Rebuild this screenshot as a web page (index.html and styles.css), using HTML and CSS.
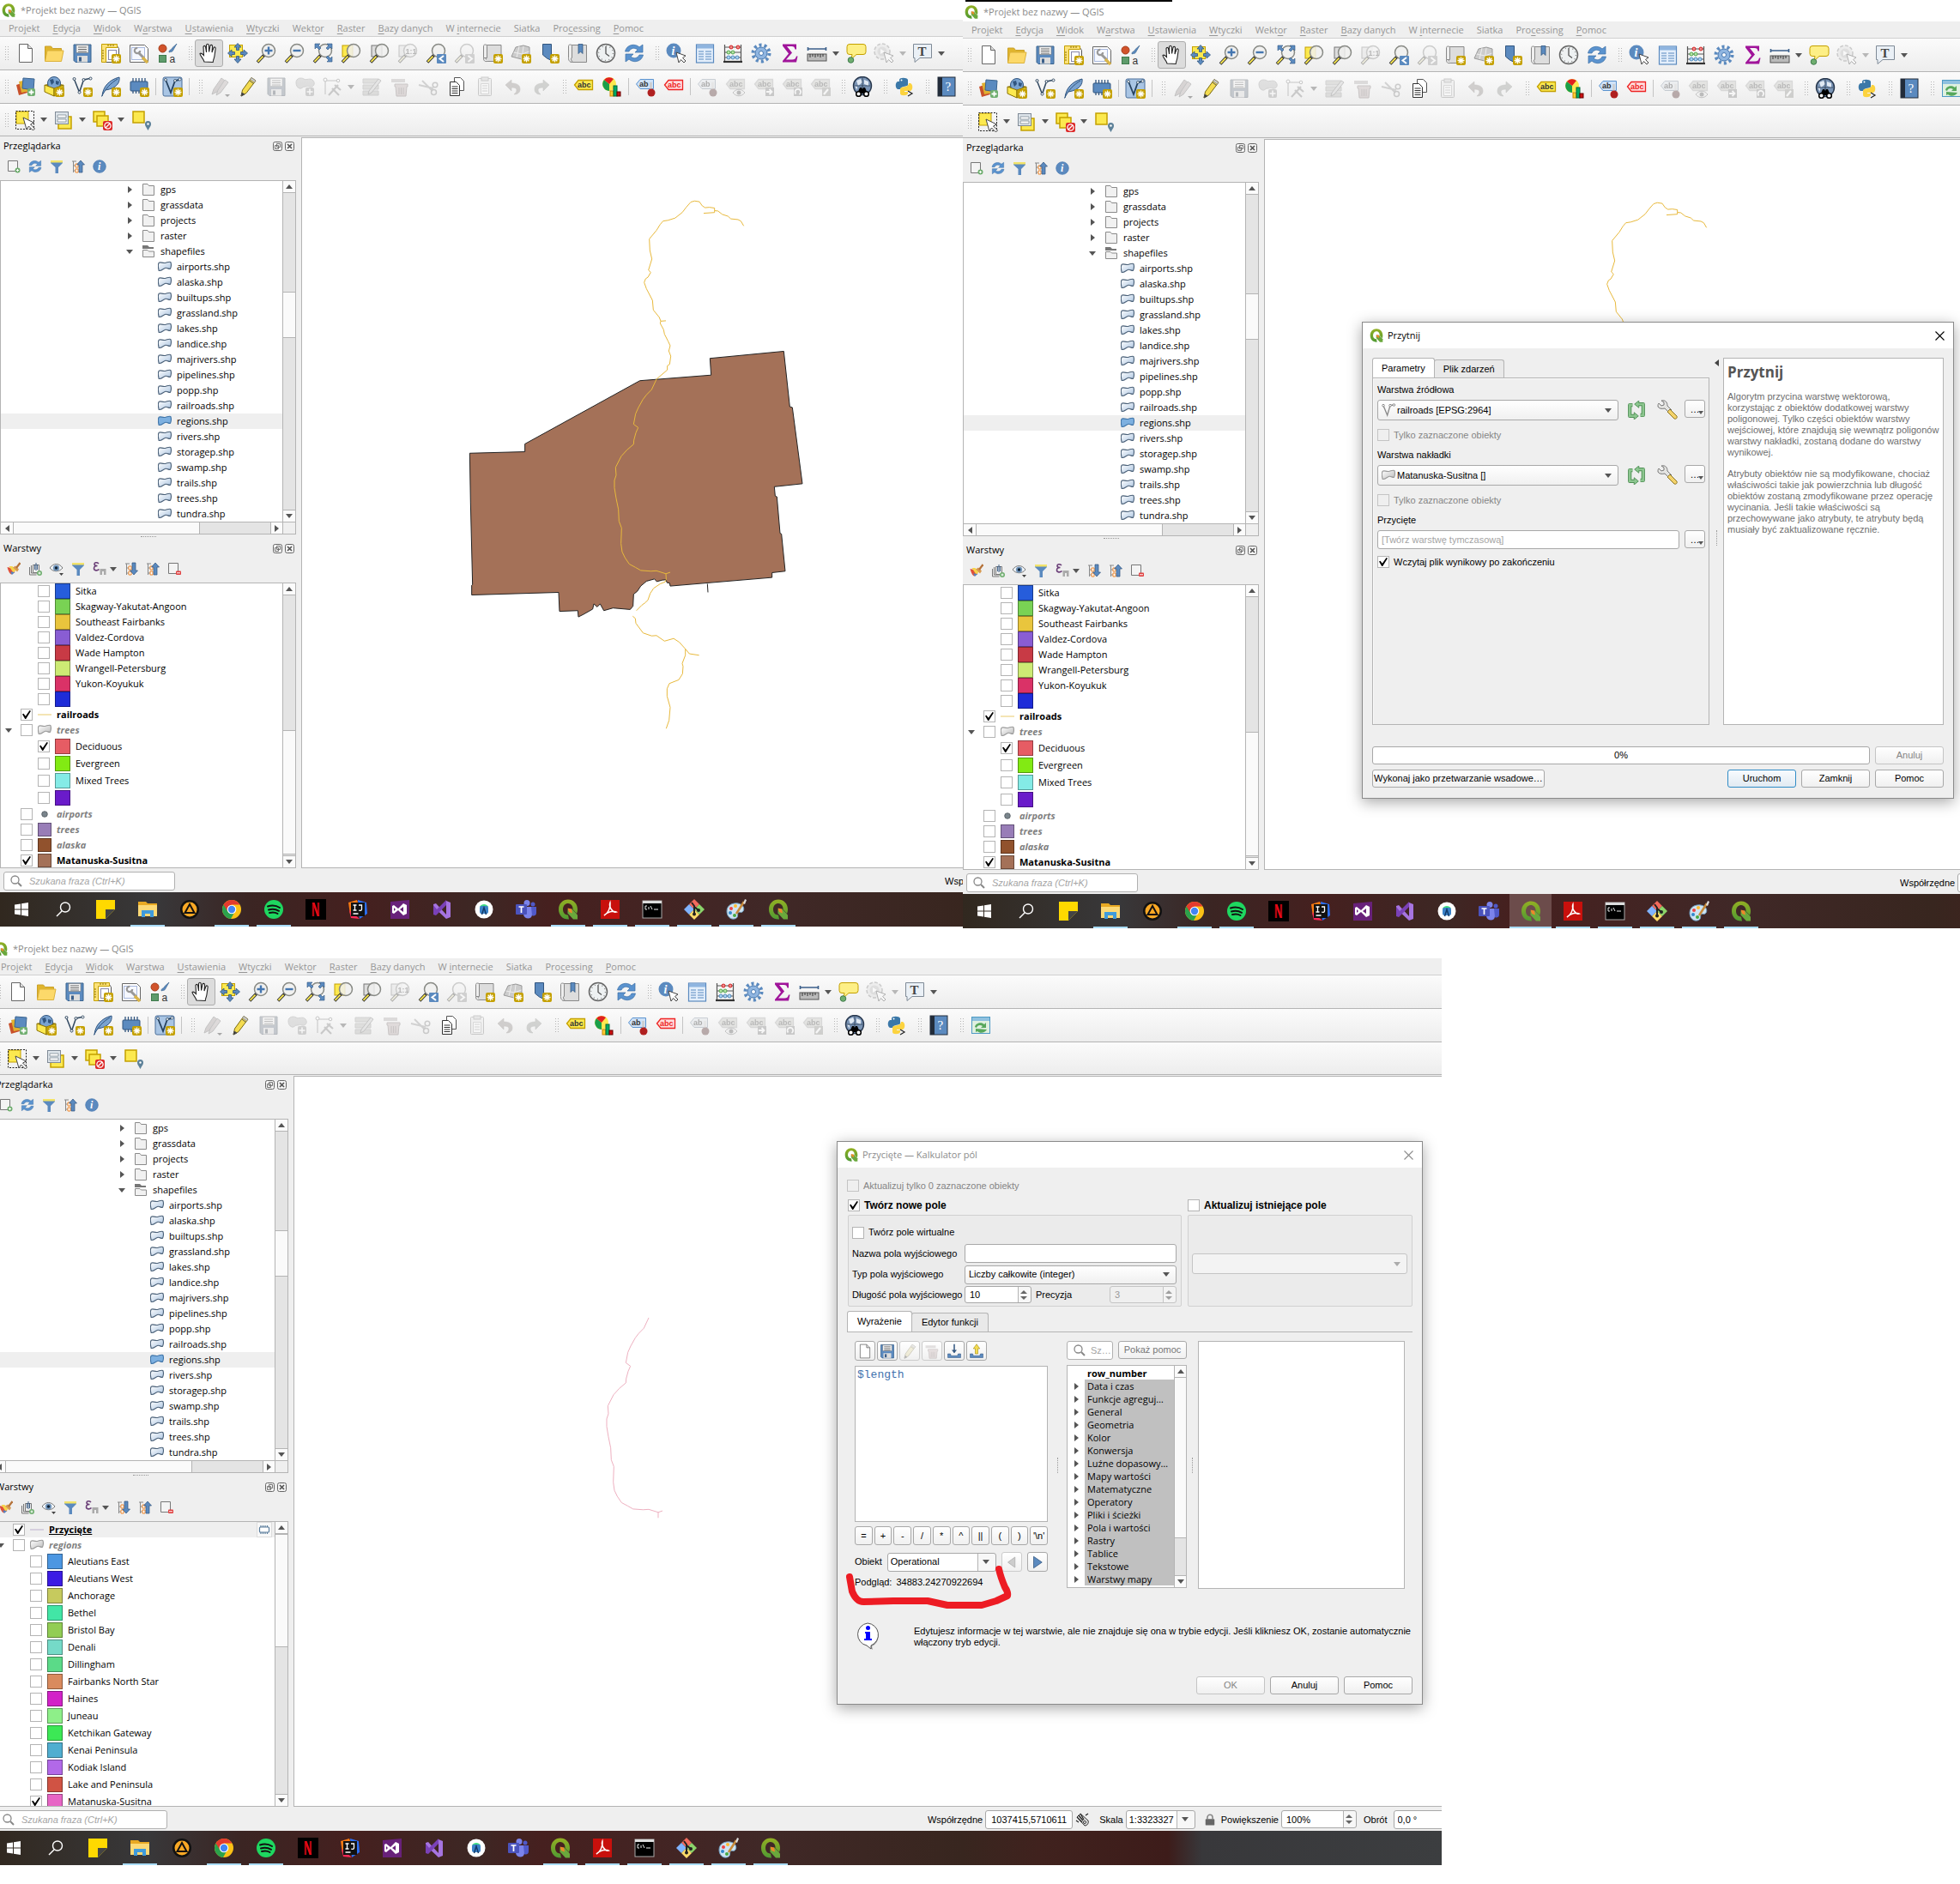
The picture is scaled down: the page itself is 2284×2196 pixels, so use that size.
FILE: index.html
```html
<!DOCTYPE html>
<html lang="pl">
<head>
<meta charset="utf-8">
<title>QGIS – przycinanie warstwy</title>
<link rel="stylesheet" href="styles.css">
</head>
<body>
<svg class="paints" aria-hidden="true">
<defs>
<linearGradient id="gBlob" x1="0" y1="0" x2="1" y2="1"><stop offset="0" stop-color="#fff"/><stop offset="1" stop-color="#a9c3e0"/></linearGradient>
<linearGradient id="gGrey" x1="0" y1="0" x2="1" y2="1"><stop offset="0" stop-color="#fff"/><stop offset="1" stop-color="#bbb"/></linearGradient>
<linearGradient id="gQ" x1="0" y1="0" x2="0" y2="1"><stop offset="0" stop-color="#93b023"/><stop offset="1" stop-color="#4f9a33"/></linearGradient>
</defs>
</svg>
<svg class="sprite" aria-hidden="true">
<symbol id="star" viewBox="0 0 24 24"><rect x="13" y="13" width="11" height="11" rx="2" fill="#c4a000"/><path d="M18.500 14.500v8M14.500 18.500h8M15.700 15.700l5.600 5.600M21.300 15.700l-5.600 5.600" stroke="#fff" stroke-width="1.300"/></symbol>
<symbol id="mag" viewBox="0 0 24 24"><path d="M10 14l-8 8.500" stroke="#333" stroke-width="3.600"/><path d="M8.500 15.600l-6 6.300" stroke="#fce94f" stroke-width="1.800"/><circle cx="15" cy="9" r="7.500" fill="#f0f0ee" fill-opacity=".85" stroke="#888a85" stroke-width="1.500"/></symbol>
<symbol id="page" viewBox="0 0 24 24"><path d="M4.500 1.500h10l5 5v16h-15z" fill="#fff" stroke="#666"/><path d="M14.500 1.500v5h5" fill="#ddd" stroke="#666"/></symbol>
<symbol id="open" viewBox="0 0 24 24"><path d="M1.500 21V4h7l2 2.500h10V9" fill="#e0b52c" stroke="#c9a02a"/><path d="M1.500 21.500L4 9h19l-2.500 12.500z" fill="#fcd96a" stroke="#dcb23a"/></symbol>
<symbol id="save" viewBox="0 0 24 24"><path d="M2 2h20v20.500H4l-2-2z" fill="#5b8abf" stroke="#3b648f"/><rect x="5" y="2.500" width="14" height="9" fill="#f2f2f2" stroke="#777" stroke-width=".6"/><path d="M7 5h10M7 7.500h10M7 10h10" stroke="#666"/><rect x="6" y="15" width="12" height="7.500" fill="#ddd"/><rect x="8" y="16.500" width="3" height="5" fill="#3b5f8a"/></symbol>
<symbol id="layout" viewBox="0 0 24 24"><path d="M2.500 2.500h16l3 4v16h-19z" fill="#fff" stroke="#555"/><path d="M1.500 1.500h18v4h-13v17h-5z" fill="#fce27a" stroke="#c4a000"/><path d="M9 2v2M12 2v2M15 2v2M2 9h2M2 12h2M2 15h2M2 18h2" stroke="#8a7000"/><rect x="9.500" y="8.500" width="9" height="11" fill="#fff" stroke="#88a"/><use href="#star"/></symbol>
<symbol id="layouts" viewBox="0 0 24 24"><path d="M1.500 2.500h17l4 4v16h-21z" fill="#fff" stroke="#666"/><rect x="3.500" y="5.500" width="15" height="14" fill="#f6f8ff" stroke="#a8b8dd"/><path d="M11 11l7 7" stroke="#999" stroke-width="3"/><circle cx="10" cy="9" r="3.200" fill="none" stroke="#999" stroke-width="2.200" stroke-dasharray="15 5"/><path d="M16 17l6 6" stroke="#d9b44a" stroke-width="3.500"/></symbol>
<symbol id="style" viewBox="0 0 24 24"><circle cx="6.500" cy="6.500" r="4.500" fill="#d1532b" stroke="#a33c1a"/><path d="M14 11c0-4 3-2 3.500-5L23 1l-4 7c-1 3-3 2-5 3z" fill="#5b8abf" stroke="#3b648f" stroke-width=".7"/><rect x="2.500" y="14.500" width="8" height="8" fill="#5e9b6b" stroke="#3f7a4c"/><text x="14.500" y="22.500" font-size="12" font-family="Liberation Sans" fill="#333">a</text></symbol>
<symbol id="pan" viewBox="0 0 24 24"><path d="M6 22c-1-4-5-7-5-9.500 1.500-1.300 3 .5 4.500 2L5 4.500c.5-1.500 2-1.500 2.500 0L8.500 11V2.500c.5-1.600 2.300-1.600 2.700 0l.4 8L13 3.200c.6-1.400 2.300-1 2.500.5L15 11l2-5.500c.8-1.200 2.300-.6 2.200.8L18 15c-.3 3-1.500 4-1.800 7.500z" fill="#fff" stroke="#222" stroke-width="1.100"/></symbol>
<symbol id="panto" viewBox="0 0 24 24"><rect x="2.500" y="2.500" width="15" height="14" fill="#fce94f" stroke="#c4a000"/><path d="M12 .5l4 4.500h-2.500v3.500h-3V5H8zM23.500 12L19 16v-2.500h-3.500v-3H19V8zM12 23.500L8 19h2.500v-3.500h3V19H16zM.5 12L5 8v2.500h3.500v3H5V16z" fill="#5b8abf" stroke="#31557f" stroke-width=".8"/></symbol>
<symbol id="zin" viewBox="0 0 24 24"><use href="#mag"/><path d="M15 4.500v9M10.500 9h9" stroke="#4476b0" stroke-width="2.400"/></symbol>
<symbol id="zout" viewBox="0 0 24 24"><use href="#mag"/><path d="M10.500 9h9" stroke="#4476b0" stroke-width="2.400"/></symbol>
<symbol id="zfull" viewBox="0 0 24 24"><use href="#mag"/><path d="M3 1h6L7 3l3 3-2 2-3-3-2 2zM23 1h-6l2 2-3 3 2 2 3-3 2 2zM23 22h-6l2-2-3-3 2-2 3 3 2-2z" fill="#5b8abf" stroke="#31557f" stroke-width=".6"/></symbol>
<symbol id="zsel" viewBox="0 0 24 24"><rect x="2" y="3" width="12" height="13" fill="#fce94f" stroke="#c4a000"/><use href="#mag"/></symbol>
<symbol id="zlay" viewBox="0 0 24 24"><rect x="3" y="3" width="12" height="13" fill="#ddd" stroke="#777"/><use href="#mag"/></symbol>
<symbol id="z11" viewBox="0 0 24 24"><rect x="2" y="3" width="12" height="13" fill="#ddd" stroke="#777"/><use href="#mag"/><text x="9.500" y="12.500" font-size="9" font-weight="700" font-family="Liberation Sans" fill="#555">1:1</text></symbol>
<symbol id="zprev" viewBox="0 0 24 24"><use href="#mag"/><rect x="13" y="13" width="11" height="11" rx="1" fill="#5b8abf"/><path d="M21 15l-4.500 3.500L21 22" fill="none" stroke="#fff" stroke-width="2"/></symbol>
<symbol id="znext" viewBox="0 0 24 24"><use href="#mag"/><rect x="13" y="13" width="11" height="11" rx="1" fill="#999"/><path d="M16.500 15l4.500 3.500-4.500 3.500" fill="none" stroke="#fff" stroke-width="2"/></symbol>
<symbol id="newmap" viewBox="0 0 24 24"><path d="M5 2.500h17v19H4z" fill="#ddd" stroke="#888"/><path d="M1.500 3.500c0-2 4-2 4 0v14h-4z" fill="#eee" stroke="#888"/><path d="M1.500 17.500c0 5 3 4 5 4" fill="#eee" stroke="#888"/><use href="#star"/></symbol>
<symbol id="new3d" viewBox="0 0 24 24"><path d="M6 5l9-2 7 2v11l-9 3-12-3z" fill="#ccc" stroke="#999"/><path d="M3.500 11l10 2 8-3M10 4l-3 13M15 4l-2 15" fill="none" stroke="#eee"/><use href="#star"/></symbol>
<symbol id="bookmark" viewBox="0 0 24 24"><path d="M4.500 1.500h10v19l-5-2.500-5 -4z" fill="#5b8abf" stroke="#31557f"/><use href="#star"/></symbol>
<symbol id="bookmarks" viewBox="0 0 24 24"><path d="M5 2.500h17.500v20H4z" fill="#ddd" stroke="#888"/><path d="M1.500 3.500c0-2 4-2 4 0v14c-2 0-1 3 1 5-3 0-5-1-5-5z" fill="#eee" stroke="#888"/><path d="M13 1.500h5v11l-2.500-2.500-2.500 2.500z" fill="#5b8abf" stroke="#31557f" stroke-width=".8"/></symbol>
<symbol id="clock" viewBox="0 0 24 24"><circle cx="12" cy="12" r="10.500" fill="#eef1f2" stroke="#666" stroke-width="1.500"/><path d="M12 4v8.500l4 3" fill="none" stroke="#555" stroke-width="1.300"/><circle cx="12" cy="12" r="8.500" fill="none" stroke="#888" stroke-width="1.500" stroke-dasharray="1 3.450"/></symbol>
<symbol id="refresh" viewBox="0 0 24 24"><path d="M1.500 10C3 2 13 0 18 5l4-3v9h-9l3-3C12 5 8 6 6 10z" fill="#5b93cf" stroke="#3b6ea5" stroke-width=".7"/><path d="M22.500 14C21 22 11 24 6 19l-4 3v-9h9l-3 3c4 3 8 2 10-2z" fill="#5b93cf" stroke="#3b6ea5" stroke-width=".7"/></symbol>
<symbol id="cursor" viewBox="0 0 24 24"><path d="M12 11l3 12 2.500-3.500L21 23l2-2-3.500-3.500L23 15z" fill="#fff" stroke="#444"/></symbol>
<symbol id="identify" viewBox="0 0 24 24"><circle cx="9" cy="9" r="8.500" fill="#5b8abf"/><text x="6.500" y="14" font-size="14" font-style="italic" font-weight="700" font-family="Liberation Serif" fill="#fff">i</text><use href="#cursor"/></symbol>
<symbol id="info" viewBox="0 0 24 24"><circle cx="12" cy="12" r="11" fill="#5b8abf" stroke="#4476b0"/><text x="9" y="18" font-size="18" font-style="italic" font-weight="700" font-family="Liberation Serif" fill="#fff">i</text></symbol>
<symbol id="table" viewBox="0 0 24 24"><rect x="2.500" y="2" width="20" height="21" fill="#e3eefb" stroke="#5b8abf" stroke-width="1.200"/><rect x="3" y="2.500" width="19" height="4" fill="#8fb5e0"/><path d="M5 10h6M13 10h7M5 13h6M13 13h7M5 16h6M13 16h7M5 19h6M13 19h7" stroke="#5b8abf" stroke-width="1.200"/></symbol>
<symbol id="abacus" viewBox="0 0 24 24"><path d="M2.500 2v20M21.500 2v20M2 5h20M2 11h20M2 17h20" stroke="#555" stroke-width="1.200"/><path d="M1 22h22" stroke="#333" stroke-width="2.200"/><g stroke-width=".8"><g fill="#ef8d8d" stroke="#c00"><circle cx="10" cy="5" r="2"/><circle cx="18" cy="5" r="2"/></g><g fill="#b5e3a5" stroke="#3a9a3a"><circle cx="7" cy="11" r="2"/><circle cx="12" cy="11" r="2"/></g><g fill="#a9d3f2" stroke="#3a7ab5"><circle cx="7" cy="17" r="2"/><circle cx="12" cy="17" r="2"/><circle cx="17" cy="17" r="2"/></g></g></symbol>
<symbol id="gear" viewBox="0 0 24 24"><circle cx="12" cy="12" r="9.500" fill="none" stroke="#5b8abf" stroke-width="4" stroke-dasharray="3 3"/><circle cx="12" cy="12" r="7" fill="#8fb5e0" stroke="#4476b0"/><circle cx="12" cy="12" r="2.500" fill="#fff" stroke="#4476b0"/></symbol>
<symbol id="sigma" viewBox="0 0 24 24"><path d="M4 1.500h16v6h-1.500c-.5-2.500-1.500-3.500-4-3.500H9l6 7.500-7 8h7c3 0 4-1 5-4h1.500l-1.500 7H4v-1.500l7-8.500-7-9z" fill="#a0149a"/></symbol>
<symbol id="ruler" viewBox="0 0 24 24"><path d="M1 7h22M1.500 5v4M22.500 5v4" stroke="#3b5f8a" stroke-width="1.600"/><rect x="1" y="13" width="22" height="8" fill="#bbb" stroke="#555"/><path d="M4 13v4M7 13v3M10 13v4M13 13v3M16 13v4M19 13v3" stroke="#333"/></symbol>
<symbol id="tip" viewBox="0 0 24 24"><path d="M4 1.500h16a3 3 0 0 1 3 3v6a3 3 0 0 1-3 3h-8L6 19l1-5.500H4a3 3 0 0 1-3-3v-6a3 3 0 0 1 3-3z" fill="#fdef86" stroke="#c4a000"/><circle cx="5.500" cy="20" r="3.300" fill="#6fae6f" stroke="#3f7a4c"/></symbol>
<symbol id="action" viewBox="0 0 24 24"><circle cx="10" cy="10" r="9" fill="#ddd" stroke="#888" stroke-dasharray="4 2" stroke-width="1.500"/><circle cx="10" cy="10" r="5.500" fill="#bbb"/><path d="M8 7l5 3-5 3z" fill="#fff"/><use href="#cursor"/></symbol>
<symbol id="textann" viewBox="0 0 24 24"><path d="M1.500 1.500h21v16H9l-6 5v-5H1.500z" fill="#eaf0f6" stroke="#7f8a96"/><text x="6.500" y="15" font-size="15" font-weight="700" font-family="Liberation Serif" fill="#444">T</text></symbol>
<symbol id="source" viewBox="0 0 24 24"><path d="M1 10l9-3 4 12-10 3z" fill="#c8502a"/><path d="M4 6l10-2 3 13-10 2z" fill="#e0b030"/><path d="M9 2l13 1-1 13-13-2z" fill="#5b8abf" stroke="#3b648f"/><rect x="14" y="14" width="9" height="9" rx="2" fill="#6fae6f"/><path d="M18.500 15.500v6M15.500 18.500h6" stroke="#fff" stroke-width="1.800"/></symbol>
<symbol id="gpkg" viewBox="0 0 24 24"><path d="M1 10l11-4 11 4-11 4z" fill="#a08820"/><circle cx="12" cy="8" r="7.500" fill="#7aa3d0" stroke="#31557f"/><path d="M7 4l4-1 1 4-3 3zM14 5l4 1-1 4-3-1z" fill="#31557f"/><path d="M1 10l11 4v9L1 18z" fill="#fce94f" stroke="#8a7000"/><path d="M23 10l-11 4v9l11-5z" fill="#dcc01c" stroke="#8a7000"/><use href="#star"/></symbol>
<symbol id="shp" viewBox="0 0 24 24"><path d="M2.500 3.500l6 15 5-14.500 7-1.500" fill="none" stroke="#334a62" stroke-width="1.500"/><g fill="#fff" stroke="#334a62"><circle cx="2.500" cy="3" r="1.500"/><circle cx="13.500" cy="4" r="1.500"/><circle cx="21.500" cy="2.500" r="1.500"/><circle cx="8.500" cy="18.500" r="1.500"/></g><use href="#star"/></symbol>
<symbol id="polyline" viewBox="0 0 24 24"><path d="M3 4l7 17 5-17 6-1" fill="none" stroke="#888" stroke-width="2"/><g fill="#fff" stroke="#888" stroke-width="1.400"><circle cx="3" cy="4" r="2"/><circle cx="15" cy="4" r="2"/><circle cx="21.500" cy="3" r="2"/></g></symbol>
<symbol id="feather" viewBox="0 0 24 24"><path d="M2 23C3 12 10 4 22 1c1 6-3 13-16 15" fill="#7aa3d0" stroke="#31557f"/><path d="M1.500 23.500C6 14 12 8 20 3" fill="none" stroke="#31557f"/><use href="#star"/></symbol>
<symbol id="chip" viewBox="0 0 24 24"><path d="M5 2v18M8.500 2v18M12 2v18M15.500 2v18M19 2v18" stroke="#31557f" stroke-width="1.300"/><rect x="2" y="6" width="20" height="11" rx="1" fill="#5b8abf" stroke="#31557f"/><use href="#star"/></symbol>
<symbol id="virtual" viewBox="0 0 24 24"><rect x="1" y="1" width="22" height="22" rx="2" fill="#a9c5e4" stroke="#4a6f9a"/><path d="M4 4l6 15 5-14 5-1" fill="none" stroke="#26425f" stroke-width="1.800"/><g fill="#fff" stroke="#26425f" stroke-width=".8"><circle cx="4" cy="4" r="1.500"/><circle cx="15" cy="5" r="1.500"/><circle cx="20.500" cy="3.500" r="1.500"/></g><use href="#star"/></symbol>
<symbol id="pencils" viewBox="0 0 24 24"><path d="M3 21l2-6L14 2l4 3-9 13z" fill="#b99" stroke="#777"/><path d="M8 22l2-6 8-12 4 3-9 12z" fill="#caa" stroke="#777"/><path d="M18 21h6l-3 3z" fill="#333"/></symbol>
<symbol id="pencil" viewBox="0 0 24 24"><path d="M4 23l1.500-7L16 1.500l5 3.500L10 19.500z" fill="#f4dc50" stroke="#7a6a10"/><path d="M14 5l4.500 3.500M4 23l1-4 3 2z" stroke="#555" fill="#333"/><path d="M16 1.500l5 3.500-1.500 2-5-3.500z" fill="#ccc" stroke="#777" stroke-width=".6"/></symbol>
<symbol id="addpoly" viewBox="0 0 24 24"><path d="M2 7c0-5 6-6 9-4s8-2 11 2 0 8-4 7-3 0-6 0-3 3-6 2-4-4-4-7z" fill="#bbb" stroke="#999"/><rect x="13" y="13" width="10" height="10" rx="2" fill="#999"/><path d="M18 14.500v7M14.500 18h7" stroke="#fff" stroke-width="1.500"/></symbol>
<symbol id="vertex" viewBox="0 0 24 24"><path d="M4 21V5h14" fill="none" stroke="#777"/><g fill="#fff" stroke="#777"><circle cx="4" cy="4" r="2"/><circle cx="19" cy="5" r="1.800"/></g><path d="M8 22l11-12M15 10l7 6M12 14l8 8" stroke="#888" stroke-width="2.200"/></symbol>
<symbol id="modify" viewBox="0 0 24 24"><path d="M2 3h18v5H2zM2 10h18v5H2zM2 17h18v5H2z" fill="#bcbcae" stroke="#999"/><path d="M8 21l1-4L20 3l3 2-11 14z" fill="#ccc" stroke="#777"/></symbol>
<symbol id="trash" viewBox="0 0 24 24"><path d="M2 3h16v4H2z" fill="#baa"/><path d="M6 9h15v3h-1l-1 11H8L7 12H6z" fill="#daa" stroke="#977"/><path d="M11 13v8M13.500 13v8M16 13v8" stroke="#977"/></symbol>
<symbol id="cut" viewBox="0 0 24 24"><path d="M1 10l17 4M5 5l12 12" stroke="#999" stroke-width="2"/><circle cx="20" cy="10" r="2.800" fill="none" stroke="#888" stroke-width="1.500"/><circle cx="18.500" cy="18.500" r="3" fill="none" stroke="#888" stroke-width="1.500"/></symbol>
<symbol id="copy" viewBox="0 0 24 24"><path d="M9.500 1.500h7l4 4v11h-11z" fill="#fff" stroke="#555"/><path d="M4.500 6.500h7l4 4v12h-11z" fill="#fff" stroke="#333"/><path d="M6.500 12h7M6.500 14.500h7M6.500 17h7M6.500 19.500h7" stroke="#333"/></symbol>
<symbol id="paste" viewBox="0 0 24 24"><rect x="4.500" y="2.500" width="15" height="20" rx="1" fill="#e8e8e8" stroke="#888"/><rect x="8" y="1" width="8" height="4" fill="#ccc" stroke="#888"/><path d="M7.500 8.500h9v12h-9z" fill="#fff" stroke="#aaa"/><path d="M9 11h6M9 14h6M9 17h6" stroke="#999"/></symbol>
<symbol id="undo" viewBox="0 0 24 24"><path d="M3 10l7-6v4c6 0 10 2 10 7 0 4-3 6-7 6 2-2 3-3 3-5s-2-3-6-3v4z" fill="#a38d80" stroke="#937f74" stroke-width=".6"/></symbol>
<symbol id="redo" viewBox="0 0 24 24"><path d="M21 10l-7-6v4C8 8 4 10 4 15c0 4 3 6 7 6-2-2-3-3-3-5s2-3 6-3v4z" fill="#949c8e" stroke="#838b7d" stroke-width=".6"/></symbol>
<symbol id="abc" viewBox="0 0 24 24"><path d="M1.500 10L6 4.500h16.500v11H6z" fill="#fce94f" stroke="#c4a000" stroke-width="1.300"/><text x="5" y="13" font-size="9" font-weight="700" font-family="Liberation Sans" fill="#333">abc</text></symbol>
<symbol id="chart" viewBox="0 0 24 24"><circle cx="9" cy="9" r="8" fill="#fce94f"/><path d="M9 9V17A8 8 0 0 1 3 4z" fill="#1a9f4a"/><path d="M9 9L3 4a8 8 0 0 1 11-1z" fill="#e02020"/><rect x="10" y="17" width="4" height="6" fill="#fc3" stroke="#c80"/><rect x="14" y="11" width="4" height="12" fill="#0a6" stroke="#063"/><rect x="18" y="18" width="4" height="5" fill="#c11" stroke="#600"/></symbol>
<symbol id="pin" viewBox="0 0 24 24"><path d="M1.500 9L6 3.500h15.500v11H6z" fill="#cfe2f8" stroke="#5b93cf"/><text x="5" y="12" font-size="9" font-weight="700" font-family="Liberation Sans" fill="#333">ab</text><path d="M18.500 7v9" stroke="#ccc" stroke-width="2.500"/><circle cx="19" cy="19" r="4.500" fill="#b02020"/></symbol>
<symbol id="abcred" viewBox="0 0 24 24"><path d="M1.500 10L6 4.500h16.500v11H6z" fill="#fdd" stroke="#e22" stroke-width="1.300"/><text x="5" y="13" font-size="9" font-weight="700" font-family="Liberation Sans" fill="#e22">abc</text></symbol>
<symbol id="abcg" viewBox="0 0 24 24"><path d="M1.500 9L6 3.500h16.500v11H6z" fill="#c9c9b4" stroke="#aaa" stroke-width="1.300"/><text x="5" y="12" font-size="9" font-weight="700" font-family="Liberation Sans" fill="#555">abc</text></symbol>
<symbol id="abeye" viewBox="0 0 24 24"><use href="#abcg"/><path d="M9 19c4-5 10-5 14 0-4 5-10 5-14 0z" fill="#eee" stroke="#777"/><circle cx="16" cy="19" r="2.500" fill="#666"/></symbol>
<symbol id="abmove" viewBox="0 0 24 24"><use href="#abcg"/><rect x="14" y="13" width="10" height="10" fill="#888"/><path d="M15 18h6M18.500 15l3 3-3 3" stroke="#fff" stroke-width="1.800" fill="none"/></symbol>
<symbol id="abrot" viewBox="0 0 24 24"><use href="#abcg"/><rect x="14" y="13" width="10" height="10" fill="#888"/><path d="M16.500 20.500a3.300 3.300 0 1 1 4 .5" stroke="#fff" stroke-width="1.800" fill="none"/></symbol>
<symbol id="abedit" viewBox="0 0 24 24"><use href="#abcg"/><rect x="14" y="13" width="10" height="10" fill="#998"/><path d="M16 21l5-6" stroke="#fff" stroke-width="2.200"/></symbol>
<symbol id="globe" viewBox="0 0 24 24"><circle cx="12" cy="11" r="10.500" fill="#7a94b5" stroke="#26364c" stroke-width="1.400"/><path d="M5 5l5-2 2 4-5 4zM14 4l5 2v5l-5-2zM3 11l3 1v4z" fill="#dfe8f2"/><path d="M2.500 11h19M12 1v19" stroke="#26364c" stroke-width=".7"/><path d="M6 20l3-7h2l1 2 1-2h2l3 7z" fill="#000"/><circle cx="7.500" cy="20.500" r="2.800" fill="#fff" stroke="#000" stroke-width="1.500"/><circle cx="16.500" cy="20.500" r="2.800" fill="#fff" stroke="#000" stroke-width="1.500"/></symbol>
<symbol id="python" viewBox="0 0 24 24"><path d="M6 6V4c0-3 9-3 10 0v6c0 2-8 1-9 5H4c-3-1-3-8 0-9z" fill="#3b78a8"/><path d="M17 8h2c3 1 3 8 0 9h-7v1h4v2c-1 3-9 3-9 0v-5c0-4 10-1 10-7z" fill="#fcd33f"/><circle cx="8.500" cy="4.500" r="1" fill="#fff"/><path d="M16 17l5 3-5 3" fill="none" stroke="#222" stroke-width="1.200"/></symbol>
<symbol id="help" viewBox="0 0 24 24"><rect x="2" y="1" width="20" height="22" fill="#5b8abf" stroke="#222c3a"/><rect x="2" y="1" width="5" height="22" fill="#222c3a"/><text x="10.500" y="17" font-size="15" font-family="Liberation Serif" fill="#fff">?</text></symbol>
<symbol id="reload" viewBox="0 0 24 24"><rect x="1.500" y="2.500" width="21" height="19" fill="#dff0e0" stroke="#4d9ac4"/><path d="M2 3h20v4H2z" fill="#8fc1df"/><path d="M5 14c1-5 8-6 11-3l2-2v6h-6l2-2c-3-2-6-1-7 2zM19 17c-2 4-8 5-11 2l-2 1v-4" fill="#57a85c"/></symbol>
<symbol id="select" viewBox="0 0 24 24"><rect x="2" y="2" width="14" height="14" fill="#fce94f" stroke="#c4a000"/><rect x="1.500" y="1.500" width="21" height="21" fill="none" stroke="#222" stroke-dasharray="2 1.500"/><path d="M10 9l4 14 2.500-4 5 5 2-2-5-5 4-2z" fill="#fff" stroke="#444"/></symbol>
<symbol id="selval" viewBox="0 0 24 24"><rect x="6" y="8" width="15" height="14" fill="#fce94f" stroke="#c4a000" stroke-width="1.500"/><rect x="2.500" y="2.500" width="15" height="14" fill="#dde4ea" stroke="#7f8a96"/><path d="M5 6h10v3H5zM5 11h10v3H5z" fill="#fff" stroke="#7f8a96" stroke-width=".8"/></symbol>
<symbol id="desel" viewBox="0 0 24 24"><rect x="2" y="2" width="13" height="12" fill="#fce94f" stroke="#c4a000" stroke-width="1.500"/><rect x="6" y="7" width="13" height="12" fill="#fce94f" stroke="#c4a000" stroke-width="1.500"/><rect x="13" y="13" width="11" height="11" rx="2" fill="#dc2828"/><circle cx="18.500" cy="18.500" r="3.600" fill="none" stroke="#fff" stroke-width="1.300"/><path d="M16 21l5-5" stroke="#fff" stroke-width="1.300"/></symbol>
<symbol id="selloc" viewBox="0 0 24 24"><rect x="2" y="2" width="13" height="13" fill="#fce94f" stroke="#c4a000" stroke-width="1.500"/><path d="M19.500 24c-2-4-3.500-5-3.500-7.500a3.500 3.500 0 0 1 7 0c0 2.500-1.500 3.500-3.500 7.500z" fill="#5d8199"/><circle cx="19.500" cy="16.500" r="1.200" fill="#fff"/></symbol>
<symbol id="qgis" viewBox="0 0 24 24"><path d="M13 23.500C6 24 1 19 1 12S6 .5 12 .5 23 5 23 12c0 2-.5 4-1 5l-4.500-5C18 8 15 5 12 5s-6 2.500-6 7 3 6.500 6 6.500z" fill="url(#gQ)"/><path d="M11.500 11.500h5l6.500 7v5h-5l-6.500-7z" fill="#6aa83c"/><path d="M11.500 10.500l4.500 1 1 5-4-1.500z" fill="#f0872a"/></symbol>
<symbol id="addlayer" viewBox="0 0 16 16"><path d="M1.500 1.500h11v12h-11z" fill="#f4f4f4" stroke="#777"/><circle cx="12.500" cy="12.500" r="3" fill="#6fae6f"/><path d="M12.500 11v3M11 12.500h3" stroke="#fff"/></symbol>
<symbol id="filter" viewBox="0 0 16 16"><path d="M1 1h14v3L10 9v7H6.500V9L1 4z" fill="#5b8abf"/><path d="M1 1h14v2.500H1z" fill="#f2e36a"/></symbol>
<symbol id="collapse" viewBox="0 0 16 16"><path d="M1 2h5M2.500 2v13M2.500 7h3M2.500 13h3" stroke="#888"/><path d="M5 5h3v4H5zM5 11h3v4H5z" fill="#fff" stroke="#f0872a"/><path d="M11 1l4.500 5H13v9H9V6H6.500z" fill="#5b8abf" stroke="#31557f" stroke-width=".7"/></symbol>
<symbol id="expand" viewBox="0 0 16 16"><path d="M1 2h5M2.500 2v13M2.500 7h3M2.500 13h3" stroke="#888"/><path d="M5 5h3v4H5zM5 11h3v4H5z" fill="#fff" stroke="#f0872a"/><path d="M11 15l4.500-5H13V1H9v9H6.500z" fill="#5b8abf" stroke="#31557f" stroke-width=".7"/></symbol>
<symbol id="brush" viewBox="0 0 16 16"><path d="M.5 6l4 1 5 5-4 2.500C3 14 1.500 10 .5 6z" fill="#e0503a"/><path d="M2.500 5l4 0 4 5-3 2.500z" fill="#f6d44a"/><path d="M4 11.500l5 .5-3 3z" fill="#4f86c6"/><path d="M7 6.500l5 5 2-3-4-4z" fill="#d89a50"/><path d="M11 7l4.500-6" stroke="#b5733a" stroke-width="2.200"/></symbol>
<symbol id="group" viewBox="0 0 16 16"><path d="M1.500 6v9h8M3.500 4v9h8" fill="none" stroke="#777"/><path d="M5.500 3.500h7v9h-7z" fill="#eee" stroke="#777"/><path d="M9 1v9M7.500 3v6M10.500 3v6" stroke="#31557f" stroke-width=".9"/><circle cx="13" cy="13" r="3" fill="#6fae6f"/><path d="M13 11.500v3M11.500 13h3" stroke="#fff"/></symbol>
<symbol id="eye" viewBox="0 0 16 16"><path d="M0 7c4-6 11-6 15 0-4 5-11 5-15 0z" fill="#eef2f6" stroke="#777"/><circle cx="7.500" cy="7" r="3.600" fill="#6f93ba"/><circle cx="7.500" cy="7" r="1.700" fill="#123"/><path d="M11 13h5l-2.500 3z" fill="#444"/></symbol>
<symbol id="eps" viewBox="0 0 16 16"><path d="M7 2C5 0 2 .5 2 2.500 2 4 3.500 4.500 5.500 4.500 3 4.500 1.500 5.500 1.500 7.500c0 3 4 3 6 1" fill="none" stroke="#6b3f78" stroke-width="1.600"/><path d="M8.500 8h7v7h-2.500v-4h-2v4H8.500z" fill="#aaa"/></symbol>
<symbol id="remove" viewBox="0 0 16 16"><path d="M1.500 1.500h11v12h-11z" fill="#f4f4f4" stroke="#777"/><rect x="10" y="10.500" width="6" height="4.500" rx="1" fill="#e04040"/><path d="M11 12.800h4" stroke="#fff"/></symbol>
<symbol id="folder" viewBox="0 0 16 16"><path d="M1.500 14.500v-13h5.500l1.500 2h6v11z" fill="#f1f1f1" stroke="#8a8a8a"/></symbol>
<symbol id="folderopen" viewBox="0 0 16 16"><path d="M1 1h6l2 2h5v2H1z" fill="#777"/><path d="M1.500 14.500v-8H7l1.500 1.500h6v6.500z" fill="#f1f1f1" stroke="#8a8a8a"/></symbol>
<symbol id="blob" viewBox="0 0 16 16"><path d="M1.200 12.500C.3 9 .3 4.500 1.300 3.200c1.700-1.200 4.200.8 7 .3 2.500-.5 4.700-2 6.500-1 .9 2 .6 5.500-.3 7.700-1.500.8-3.500-1.200-5.500-.9-2.500.4-4.500 3.700-7.800 3.200z" stroke-width="1.100"/></symbol>
<symbol id="line" viewBox="0 0 16 16"><path d="M0 8h16" stroke="currentColor" stroke-width="1.500"/></symbol>
<symbol id="dot" viewBox="0 0 16 16"><circle cx="8" cy="8" r="3.300" fill="#7a858c" stroke="#50585e" stroke-width=".8"/></symbol>
<symbol id="memory" viewBox="0 0 16 16"><path d="M4 3v10M6.500 3v10M9 3v10M11.500 3v10" stroke="#5a7d9c" stroke-width="1.200"/><rect x="2.500" y="5" width="11" height="6" rx="1" fill="#fff" stroke="#5a7d9c" stroke-width="1.200"/></symbol>
<symbol id="float" viewBox="0 0 11 11"><rect x=".5" y=".5" width="10" height="10" rx="2" fill="#f4f4f4" stroke="#666"/><path d="M4.500 2.500h4v4h-4zM2.500 4.500h4v4h-4z" fill="#f4f4f4" stroke="#666" stroke-width=".9"/></symbol>
<symbol id="close" viewBox="0 0 11 11"><rect x=".5" y=".5" width="10" height="10" rx="2" fill="#f4f4f4" stroke="#666"/><path d="M3 3l5 5M8 3l-5 5" stroke="#555" stroke-width="1.700"/></symbol>
<symbol id="cross" viewBox="0 0 11 11"><path d="M.5 .5l10 10M10.500 .5l-10 10" stroke="currentColor" stroke-width="1.100"/></symbol>
<symbol id="lens" viewBox="0 0 14 14"><circle cx="5.500" cy="5.500" r="4.500" fill="none" stroke="#888" stroke-width="1.300"/><path d="M9 9l4 4" stroke="#888" stroke-width="2"/></symbol>
<symbol id="mouse" viewBox="0 0 16 16"><path d="M2 5l4-4 9 8c1 3-1 6-4 6z" fill="#ddd" stroke="#333"/><path d="M4 3l5 6M2 5l6 6M6 1l4 7M12 3l3-2M1 9l3 2" stroke="#222" stroke-width="1.200"/><circle cx="11" cy="11" r="1.500" fill="#fff" stroke="#333"/></symbol>
<symbol id="lock" viewBox="0 0 14 16"><path d="M3.500 7V5a3.500 3.500 0 0 1 7 0v2" fill="none" stroke="#888" stroke-width="1.800"/><rect x="1" y="7" width="12" height="8.500" rx="1" fill="#666"/></symbol>
<symbol id="loop" viewBox="0 0 24 24"><g fill="none" stroke="#4f8f55" stroke-width="4.600" stroke-linejoin="round"><path d="M9 19.500H3.500v-14H7M15 4.500h5.500v14H17"/></g><path d="M15 0v9l-5.500-4.500zM9 24v-9l5.500 4.500z" fill="#8cc68f" stroke="#4f8f55"/><g fill="none" stroke="#8cc68f" stroke-width="2.600"><path d="M10 19.500H3.500v-14H6.500M14 4.500h6.500v14h-3"/></g></symbol>
<symbol id="wrench" viewBox="0 0 24 24"><path d="M1 8c0-2 0-3 1-4l3 3 3-1 0-3-3-2c5-1 7 2 7 6l5 5-3 3-5-5c-4 1-7 0-8-2z" fill="#e4e4e2" stroke="#777"/><path d="M12 14l3-3 8 8c1 2-1 4-3 3z" fill="#f3d26a" stroke="#8a7426"/></symbol>
<symbol id="import" viewBox="0 0 24 24"><path d="M2 16h4l1 3h10l1-3h4v6H2z" fill="#5b8abf" stroke="#31557f" stroke-width=".7"/><path d="M12 1v13" stroke="#31557f" stroke-width="2"/><path d="M8 10h8l-4 5z" fill="#31557f"/></symbol>
<symbol id="export" viewBox="0 0 24 24"><path d="M2 16h4l1 3h10l1-3h4v6H2z" fill="#5b8abf" stroke="#31557f" stroke-width=".7"/><path d="M10 16V8H7l5-7 5 7h-3v8z" fill="#f4dc50" stroke="#a08a10" stroke-width=".8"/></symbol>
<symbol id="prev" viewBox="0 0 24 24"><path d="M17 4v16L6 12z" fill="#ccc" stroke="#aaa"/></symbol>
<symbol id="next" viewBox="0 0 24 24"><path d="M6 3v18l13-9z" fill="#5b8abf" stroke="#31557f"/></symbol>
<symbol id="balloon" viewBox="0 0 32 32"><path d="M18 3a13.500 13.500 0 0 1 2 25l1 4-6-4A13 13 0 0 1 18 3z" fill="#999"/><path d="M15 1a13.500 13.500 0 0 1 4 26v4l-5-4A13.200 13.200 0 0 1 15 1z" fill="#fff" stroke="#555"/><path d="M12 11h6v8h2v2h-9v-2h2v-6h-1z" fill="#00f"/><circle cx="15.500" cy="6.500" r="2.500" fill="#00f"/></symbol>
<symbol id="t-win" viewBox="0 0 24 24"><path d="M4 6.500l7-1v6H4zM12 5.300l8-1.300v7.500h-8zM4 12.500h7v6l-7-1zM12 12.500h8V20l-8-1.300z" fill="#fff"/></symbol>
<symbol id="t-find" viewBox="0 0 24 24"><circle cx="14" cy="9.500" r="5.500" fill="none" stroke="#fff" stroke-width="1.400"/><path d="M10 14l-6 6" stroke="#fff" stroke-width="1.500"/></symbol>
<symbol id="t-note" viewBox="0 0 24 24"><path d="M1 1h22v11L12 23H1z" fill="#ffd900"/><path d="M12 23V12h11z" fill="#444"/></symbol>
<symbol id="t-files" viewBox="0 0 24 24"><path d="M1 3h9l2 2h11v14H1z" fill="#e8a923"/><path d="M1 7h22v13H1z" fill="#fcd976"/><path d="M5 21v-8h14v8h-4v-4H9v4z" fill="#3f9bdc"/></symbol>
<symbol id="t-amp" viewBox="0 0 24 24"><circle cx="12" cy="12" r="11" fill="#111"/><circle cx="12" cy="12" r="8.500" fill="#f9a825"/><path d="M12 6l5.500 10h-11z" fill="none" stroke="#111" stroke-width="2"/></symbol>
<symbol id="t-chrome" viewBox="0 0 24 24"><circle cx="12" cy="12" r="11" fill="#fbc116"/><path d="M12 12L2.500 6.500A11 11 0 0 0 11 23l5-9z" fill="#2ba24c"/><path d="M12 6.500h9.500A11 11 0 0 0 2.500 6.500l5 8z" fill="#e33b2e"/><circle cx="12" cy="12" r="5.300" fill="#fff"/><circle cx="12" cy="12" r="4.200" fill="#4285f4"/></symbol>
<symbol id="t-spot" viewBox="0 0 24 24"><circle cx="12" cy="12" r="11" fill="#1ed760"/><path d="M5 8.500c5-1.500 10-1 14 1.500M6 12.500c4-1.300 8.500-.8 12 1.300M7 16c3.500-1 7-.6 9.500 1" fill="none" stroke="#111" stroke-width="2" stroke-linecap="round"/></symbol>
<symbol id="t-net" viewBox="0 0 24 24"><path d="M0 0h24v24H0z" fill="#000"/><path d="M9 4v16M15 4v16" stroke="#b1060f" stroke-width="2.400"/><path d="M8 4h2.600l5.600 16h-2.600z" fill="#e50914"/></symbol>
<symbol id="t-ij" viewBox="0 0 24 24"><path d="M1 4l10-3 3 8-11 9z" fill="#f97a12"/><path d="M12 1l10 3 1 13-9 6z" fill="#2b6ff5"/><path d="M2 13l12 10-10-1z" fill="#fe2857"/><rect x="4" y="4" width="16" height="16" fill="#111"/><path d="M6.500 7h4M8.500 7v6M6.500 13h4M13 7h3.500v5c0 1.500-2 1.500-3.500 1M6.500 17h6" fill="none" stroke="#fff" stroke-width="1.300"/></symbol>
<symbol id="t-vs" viewBox="0 0 24 24"><path d="M1 3l22-2v22H1z" fill="#68217a"/><path d="M3 8l2-1 5 4 6-6 4 2v10l-4 2-6-6-5 4-2-1zM5 10v4l2-2zM16 9l-4 3 4 3z" fill="#fff" fill-rule="evenodd"/></symbol>
<symbol id="t-vs2" viewBox="0 0 24 24"><path d="M2 6l3-1 12 13V2l5 2v17l-5 2L2 9z" fill="#a674e0"/><path d="M2 18V7l4 5 11-11v6L5 19z" fill="#7a41b8"/></symbol>
<symbol id="t-and" viewBox="0 0 24 24"><circle cx="12" cy="12" r="10.500" fill="#fff"/><path d="M7 9c2-4 8-4 10 0z" fill="#3ddc84"/><rect x="7" y="8" width="10" height="9" rx="2" fill="#3b82c8"/><path d="M9.500 18L12 10l2.500 8" fill="none" stroke="#123a6a" stroke-width="1.500"/></symbol>
<symbol id="t-teams" viewBox="0 0 24 24"><circle cx="13" cy="4.500" r="3.500" fill="#7b83eb"/><circle cx="20" cy="6" r="2.500" fill="#5059c9"/><path d="M9 9h10v9c0 6-9 6-10 0z" fill="#7b83eb"/><path d="M18 9h6v7c0 4-4 4-5 3z" fill="#5059c9"/><rect x="0" y="6" width="13" height="12" rx="1" fill="#4b53bc"/><path d="M3.500 9h6M6.500 9v7" stroke="#fff" stroke-width="1.700"/></symbol>
<symbol id="t-pdf" viewBox="0 0 24 24"><path d="M1 1h22v22H1z" fill="#c8100c"/><path d="M5 19c4-2 8-9 7-15-2 5 3 12 7 11-4-2-10 0-14 4z" fill="none" stroke="#fff" stroke-width="1.500"/></symbol>
<symbol id="t-cmd" viewBox="0 0 24 24"><rect x="1" y="2" width="22" height="20" fill="#000" stroke="#aaa"/><path d="M1 2h22v3H1z" fill="#ddd"/><path d="M6 8H4v4h2M8 9v3M10 8l2 4M14 12h5" fill="none" stroke="#eee"/></symbol>
<symbol id="t-git" viewBox="0 0 24 24"><path d="M12 0l6 6-6 6-6-6z" fill="#f16a5c"/><path d="M6 6l6 6-6 6-6-6z" fill="#80b3ff"/><path d="M18 6l6 6-6 6-6-6z" fill="#8bd46a"/><path d="M12 12l6 6-6 6-6-6z" fill="#ffdc6a"/><path d="M9 4l3 4v9M12 9l5 4" fill="none" stroke="#222" stroke-width="2"/><circle cx="12" cy="17.500" r="2" fill="#222"/><circle cx="17" cy="13" r="2" fill="#222"/></symbol>
<symbol id="t-paint" viewBox="0 0 24 24"><path d="M1 14C1 7 8 4 14 5s8 6 6 9-5 0-6 2 1 6-4 7-9-3-9-9z" fill="#cfe4f2" stroke="#6c9cc0"/><circle cx="6" cy="11" r="2" fill="#e44"/><circle cx="11" cy="8" r="2" fill="#fb3"/><circle cx="5" cy="16" r="2" fill="#38c"/><circle cx="10" cy="19" r="2" fill="#4a4"/><path d="M12 17l9-14" stroke="#c88a3a" stroke-width="2.500"/><path d="M20 5l2-5 2 1-2 5z" fill="#ddd"/></symbol>
</svg>

<main class="board">
  <section class="shot shot-a" data-window="a"></section>

  <section class="shot shot-b" data-window="b">
    <div class="dialog clip">
      <header class="dlg-title"><svg class="i16"><use href="#qgis"/></svg><h2>Przytnij</h2><button aria-label="Zamknij okno"><svg class="i11"><use href="#cross"/></svg></button></header>
      <div class="clip-body">
        <div class="clip-cols">
          <div class="tabset">
            <div class="tabs"><button class="tab on">Parametry</button><button class="tab">Plik zdarzeń</button></div>
            <div class="pane">
              <label for="src">Warstwa źródłowa</label>
              <div class="line">
                <div class="combo tall"><svg class="i16"><use href="#polyline"/></svg><select id="src"><option>railroads [EPSG:2964]</option></select></div>
                <button class="flat" aria-label="Iteruj"><svg class="i22"><use href="#loop"/></svg></button><button class="flat" aria-label="Opcje"><svg class="i24"><use href="#wrench"/></svg></button><button class="more">…</button>
              </div>
              <label class="tick off"><input type="checkbox" disabled>Tylko zaznaczone obiekty</label>
              <label for="ovl">Warstwa nakładki</label>
              <div class="line">
                <div class="combo tall"><svg class="i16 greyblob"><use href="#blob"/></svg><select id="ovl"><option>Matanuska-Susitna []</option></select></div>
                <button class="flat" aria-label="Iteruj"><svg class="i22"><use href="#loop"/></svg></button><button class="flat" aria-label="Opcje"><svg class="i24"><use href="#wrench"/></svg></button><button class="more">…</button>
              </div>
              <label class="tick off"><input type="checkbox" disabled>Tylko zaznaczone obiekty</label>
              <label for="out">Przycięte</label>
              <div class="line"><input class="field" id="out" type="text" placeholder="[Twórz warstwę tymczasową]"><button class="more">…</button></div>
              <label class="tick last"><input type="checkbox" checked>Wczytaj plik wynikowy po zakończeniu</label>
            </div>
          </div>
          <div class="gutter"><i class="left-arrow"></i><i class="vdots"></i><i></i></div>
          <article class="helpbox">
            <h3>Przytnij</h3>
            <p>Algorytm przycina warstwę wektorową,<br>korzystając z obiektów dodatkowej warstwy<br>poligonowej. Tylko części obiektów warstwy<br>wejściowej, które znajdują się wewnątrz poligonów<br>warstwy nakładki, zostaną dodane do warstwy<br>wynikowej.</p>
            <p>Atrybuty obiektów nie są modyfikowane, chociaż<br>właściwości takie jak powierzchnia lub długość<br>obiektów zostaną zmodyfikowane przez operację<br>wycinania. Jeśli takie właściwości są<br>przechowywane jako atrybuty, te atrybuty będą<br>musiały być zaktualizowane ręcznie.</p>
          </article>
        </div>
        <div class="btnrow"><div class="progress" role="progressbar" aria-valuenow="0">0%</div><button class="btn" disabled>Anuluj</button></div>
        <div class="btnrow"><button class="btn wide">Wykonaj jako przetwarzanie wsadowe…</button><span class="grow"></span><button class="btn primary">Uruchom</button><button class="btn">Zamknij</button><button class="btn">Pomoc</button></div>
      </div>
    </div>
  </section>

  <section class="shot shot-c" data-window="c">
    <div class="dialog calc">
      <header class="dlg-title dim"><svg class="i16"><use href="#qgis"/></svg><h2>Przycięte — Kalkulator pól</h2><button aria-label="Zamknij okno"><svg class="i11"><use href="#cross"/></svg></button></header>
      <div class="calc-body">
        <label class="tick off"><input type="checkbox" disabled>Aktualizuj tylko 0 zaznaczone obiekty</label>
        <div class="calc-top">
          <div>
            <label class="tick strong"><input type="checkbox" checked>Twórz nowe pole</label>
            <div class="groupbox newfield">
              <label class="tick full"><input type="checkbox">Twórz pole wirtualne</label>
              <label for="fname">Nazwa pola wyjściowego</label><input class="field full2" id="fname" type="text">
              <label for="ftype">Typ pola wyjściowego</label><div class="combo full2"><select id="ftype"><option>Liczby całkowite (integer)</option></select></div>
              <label for="flen">Długość pola wyjściowego</label><div class="spin"><input id="flen" type="text" value="10"><i></i></div>
              <label for="fprec">Precyzja</label><div class="spin off"><input id="fprec" type="text" value="3" disabled><i></i></div>
            </div>
          </div>
          <div>
            <label class="tick strong"><input type="checkbox">Aktualizuj istniejące pole</label>
            <div class="groupbox existing"><div class="combo tall off"><select disabled aria-label="Istniejące pole"><option></option></select></div></div>
          </div>
        </div>
        <div class="tabs lined"><button class="tab on">Wyrażenie</button><button class="tab">Edytor funkcji</button></div>
        <div class="expr">
          <div class="expr-left">
            <div class="minibar">
              <button aria-label="Nowe"><svg class="i18"><use href="#page"/></svg></button><button aria-label="Zapisz"><svg class="i18"><use href="#save"/></svg></button><button disabled aria-label="Edytuj"><svg class="i18"><use href="#pencil"/></svg></button><button disabled aria-label="Usuń"><svg class="i18"><use href="#trash"/></svg></button><button aria-label="Importuj"><svg class="i18"><use href="#import"/></svg></button><button aria-label="Eksportuj"><svg class="i18"><use href="#export"/></svg></button>
            </div>
            <textarea class="editor" aria-label="Wyrażenie" spellcheck="false">$length</textarea>
            <div class="ops"><button>=</button><button>+</button><button>-</button><button>/</button><button>*</button><button>^</button><button>||</button><button>(</button><button>)</button><button>'\n'</button></div>
            <div class="objrow"><label for="obj">Obiekt</label><div class="combo split"><select id="obj"><option>Operational</option></select></div><button disabled aria-label="Poprzedni"><svg class="i18"><use href="#prev"/></svg></button><button aria-label="Następny"><svg class="i18"><use href="#next"/></svg></button></div>
            <div class="preview"><span>Podgląd:</span><output>34883.24270922694</output>
              <svg class="scribble" width="190" height="56"><path d="M6 14L9 31Q14 43 22 43L57 42H97L120 47H160L177 42L190 36Q191 32 187 26Q182 14 180 5" /></svg>
            </div>
          </div>
          <div class="gutter"><i></i><i class="vdots"></i><i></i></div>
          <div class="expr-mid">
            <div class="findrow"><div class="find"><svg class="i14"><use href="#lens"/></svg><input type="text" placeholder="Sz…" aria-label="Szukaj"></div><button class="btn faint">Pokaż pomoc</button></div>
            <div class="fnbox"><ul class="fns"></ul><div class="vbar fnbar"><b class="up"></b><i></i><b class="down"></b></div></div>
          </div>
          <div class="gutter"><i></i><i class="vdots"></i><i></i></div>
          <div class="blank"></div>
        </div>
        <div class="notice"><svg class="i32"><use href="#balloon"/></svg><p>Edytujesz informacje w tej warstwie, ale nie znajduje się ona w trybie edycji. Jeśli klikniesz OK, zostanie automatycznie<br>włączony tryb edycji.</p></div>
        <div class="btnrow end"><button class="btn" disabled>OK</button><button class="btn">Anuluj</button><button class="btn">Pomoc</button></div>
      </div>
    </div>
  </section>
</main>
<script src="app.js"></script>
</body>
</html>
```

FILE: styles.css
```css
* { box-sizing: border-box; }
body { margin: 0; background: #fff; color: #000; font: 11px/16px "Open Sans", "Noto Sans", sans-serif; }
button, input, select, textarea { font: inherit; color: inherit; margin: 0; padding: 0; border: 0; background: none; }
h2, h3, p, ul { margin: 0; padding: 0; font-weight: 400; font-size: inherit; list-style: none; }
svg { display: block; flex: none; overflow: hidden; }
.sprite { display: none; }
.paints { position: absolute; width: 0; height: 0; }
.i11 { width: 11px; height: 11px; }
.i14 { width: 14px; height: 14px; }
.i16 { width: 16px; height: 16px; }
.i18 { width: 18px; height: 18px; }
.i22 { width: 22px; height: 22px; }
.i24 { width: 24px; height: 24px; }
.i32 { width: 32px; height: 32px; }

/* three desktop captures side by side and below */
.board { display: grid; grid-template-columns: 1122fr 1162fr; row-gap: 12px; align-items: start; }
.shot { position: relative; overflow: hidden; min-width: 0; }
.shot-b { padding-top: 2px; }
.shot-b::before { content: ""; position: absolute; top: 0; left: 3px; width: 241px; height: 2px; background: #000; }
.shot-c { grid-column: 1 / -1; width: 73.555%; }
.shot-c .desk { margin-left: -9px; }

/* main window */
.desk { background: #efefef; }
.title { display: flex; align-items: center; gap: 6px; height: 23px; padding-left: 2px; background: #fff; color: #8a8a8a; }
.menu { display: flex; gap: 15px; height: 20px; padding-left: 10px; border-bottom: 1px solid #d0d0d0; color: #969696; line-height: 18px; overflow: hidden; }
.menu button { flex: none; }
.menu u { text-underline-offset: 2px; }
.toolbar { display: flex; align-items: center; height: 39px; overflow: hidden; border-bottom: 1px solid #b4b4b4; background: linear-gradient(#fbfbfb, #ededed); }
.toolbar.short { height: 38px; }
.toolbar > * { flex: none; }
.handle { width: 16px; height: 18px; background: radial-gradient(circle, #b5b5b5 35%, transparent 45%) 8px 0 / 3px 3px repeat-y, radial-gradient(circle, #b5b5b5 35%, transparent 45%) 11px 0 / 3px 3px repeat-y; }
.handle:first-child { width: 13px; background-position: 5px 0, 8px 0; }
.sep { width: 6px; height: 20px; background: linear-gradient(#c4c4c4, #c4c4c4) 3px 0 / 1px 100% no-repeat; }
.tool { display: flex; align-items: center; justify-content: center; width: 33px; height: 32px; border: 1px solid transparent; border-radius: 3px; }
.tool.has-menu { justify-content: flex-start; width: 45px; gap: 6px; padding-left: 3px; }
.tool.has-menu::after { content: ""; border: 4px solid transparent; border-top: 5px solid #555; border-bottom: 0; }
.tool.on { background: #dcdcdc; border-color: #adadad; }
.tool:disabled { filter: grayscale(.75); opacity: .38; }

.workspace { display: flex; }
.docks { flex: none; width: 345px; }
.dock-title { display: flex; align-items: center; gap: 3px; height: 22px; padding: 0 2px 0 4px; }
.dock-title h2 { flex: 1; font-size: 11px; }
.dock-tools { display: flex; align-items: center; height: 26px; padding-left: 3px; margin-bottom: 3px; }
.dock-tools button { width: 25px; display: flex; justify-content: center; align-items: center; gap: 4px; }
.dock-tools .has-menu { width: 37px; }
.dock-tools .has-menu::after { content: ""; border: 4px solid transparent; border-top: 5px solid #555; border-bottom: 0; }
.listbox { display: grid; grid-template-columns: 1fr 15px; background: #fff; border: 1px solid #b4b4b4; overflow: hidden; }
.browser { padding-top: 1px; min-width: 0; }
.browser li { display: flex; align-items: center; height: 18px; padding-left: 183px; gap: 6px; }
.browser li.dir { padding-left: 146px; }
.browser li.sel { background: #efefef; }
.arrow { flex: none; width: 12px; height: 8px; }
.arrow::before { content: ""; display: block; width: 0; border: 4px solid transparent; border-left: 5px solid #555; border-right: 0; margin-left: 2px; }
.arrow.opened::before { border: 4px solid transparent; border-top: 5px solid #555; border-bottom: 0; margin: 2px 0 0; }
.arrow.leaf::before { content: none; }
.vectorblob { fill: url(#gBlob); stroke: #4a6078; }
.sel .vectorblob { fill: #7db0e0; stroke: #3f74a8; }
.greyblob { fill: url(#gGrey); stroke: #999; }
.vbar, .hbar { display: flex; background: #e4e4e4; }
.vbar { flex-direction: column; border-left: 1px solid #b4b4b4; min-height: 0; }
.hbar { border-top: 1px solid #b4b4b4; height: 14px; }
.vbar b, .hbar b { flex: none; width: 14px; height: 14px; display: flex; align-items: center; justify-content: center; background: #fbfbfb; border: 0 solid #b4b4b4; }
.hbar b { height: 13px; }
.vbar i, .hbar i { background: #fafafa; border: 0 solid #b4b4b4; }
.vbar i { border-width: 1px 0; }
.hbar i { border-right-width: 1px; border-left-width: 1px; }
.vbar b::after, .hbar b::after { content: ""; border: 4px solid transparent; }
.vbar .up::after { border-bottom: 5px solid #555; border-top: 0; }
.vbar .down::after { border-top: 5px solid #555; border-bottom: 0; }
.hbar .lft::after { border-right: 5px solid #555; border-left: 0; }
.hbar .rgt::after { border-left: 5px solid #555; border-right: 0; }
.vbar .up { border-bottom-width: 1px; }
.vbar .down { border-top-width: 1px; margin-top: auto; }
.hbar .rgt { border-left-width: 1px; margin-left: auto; }
.fnbar i { height: 187px; border-top: 0; }
.corner { border: solid #b4b4b4; border-width: 1px 0 0 1px; background: #efefef; }
.hgrip { height: 5px; display: flex; justify-content: center; align-items: center; }
.hgrip::after { content: ""; width: 18px; border-top: 1px dotted #999; }
.layerbox { height: 333px; }
.layers { min-width: 0; overflow: hidden; }
.layers li { display: flex; align-items: center; height: 18px; padding-left: 5px; }
.layers li.roomy { height: 20px; }
.layers li.sel { background: #efefef; }
.layers .arrow { width: 18px; }
.layers label { display: flex; align-items: center; gap: 6px; flex: 1; }
.layers .child label { padding-left: 20px; }
.layers .top { font-weight: 700; }
.layers .hiddenlayer { color: #808080; font-style: italic; }
.layers .sel span { text-decoration: underline; }
.swatch { flex: none; width: 18px; height: 18px; border: 1px solid rgb(0 0 0 / .35); }
.swatch.small { width: 16px; height: 16px; }
.ramline { color: #cdc5d9; }
.railline { color: #f0dc9c; }
.memo { width: 16px; height: 16px; margin-right: 4px; outline: 1px solid #ddd; background: #f8f8f8; }

input[type=checkbox] { appearance: none; flex: none; width: 14px; height: 14px; border: 1px solid #b4b4b4; background: #fff; }
input[type=checkbox]:checked::before { content: ""; display: block; width: 10px; height: 10px; margin: 1px; background: #000; clip-path: polygon(0 45%, 15% 38%, 38% 68%, 85% 0, 100% 8%, 42% 100%, 32% 100%); }
input[type=checkbox]:disabled { background: #efefef; border-color: #c4c4c4; }

.canvas { flex: 1; min-width: 0; margin: 1px 0 0 6px; background: #fff; border: solid #b4b4b4; border-width: 1px 0 1px 1px; }
.canvas svg { width: 100%; height: 100%; }
.rail { fill: none; stroke: #e8b93c; stroke-width: 1; vector-effect: non-scaling-stroke; }
.rail.clipped { stroke: #eeb0c0; }
.region { fill: #a47158; stroke: #232323; stroke-width: 1; vector-effect: non-scaling-stroke; }

.status { display: flex; align-items: center; height: 28px; padding: 1px 0 0 4px; font-family: "Liberation Sans", sans-serif; }
.find { display: flex; align-items: center; gap: 8px; width: 200px; height: 22px; padding-left: 7px; background: #fff; border: 1px solid #b0b0b0; border-radius: 3px; }
.find input { flex: 1; min-width: 0; font-style: italic; }
::placeholder { color: #a4a4a4; opacity: 1; }
.readouts { display: flex; align-items: center; flex: none; overflow: hidden; margin-left: auto; white-space: nowrap; }
.readouts > * { flex: none; }
.readouts-a { width: 21px; }
.readouts-b { width: 70px; }
.readouts-c { width: 599px; }
.readouts .field { margin: 0 3px; }
.readouts .coords { width: 102px; text-align: center; padding: 0; }
.readouts .scale { width: 81px; margin: 0 10px 0 3px; }
.readouts .zoom { width: 88px; margin: 0 8px 0 3px; height: 21px; }
.readouts .turn { width: 90px; margin-left: 7px; }
.gapr { margin-right: 12px; }
.gaps { margin-right: 6px; }

.taskbar { display: flex; height: 40px; overflow: hidden; background: linear-gradient(90deg, #31281f, #38383a 180px, #3b2523 290px, #45201f 420px, #3d2724 560px, #46201f 640px, #402827 900px, #38261f 1130px, #40221e 1220px, #3d1c1a 1370px, #38383b 1410px, #3c3e40); }
.task { flex: none; width: 49px; display: flex; flex-direction: column; align-items: center; padding-top: 8px; }
.task.run::after { content: ""; width: 40px; height: 2px; margin-top: 6px; background: #a9dcf8; }
.task.current { background: #6c4c4b; }
.task.current::after { width: 49px; }

/* dialogs */
.dialog { position: absolute; background: #efefef; border: 1px solid #8a8a8a; box-shadow: 0 4px 16px rgb(0 0 0 / .35); font: 11px/13px "Liberation Sans", sans-serif; }
.clip { left: 465px; top: 375px; width: 690px; }
.calc { left: 975px; top: 236px; width: 683px; }
.dlg-title { display: flex; align-items: center; gap: 5px; height: 30px; padding: 0 10px 0 8px; background: #fff; font: 11px/16px "Open Sans", sans-serif; }
.dlg-title h2 { flex: 1; }
.dim { color: #8c8c8c; }
.tabs { display: flex; align-items: flex-end; height: 24px; }
.tab { height: 22px; padding: 0 10px; background: #e9e9e9; border: 1px solid #b4b4b4; border-bottom: 0; border-radius: 3px 3px 0 0; margin-left: -1px; }
.tab.on { height: 24px; margin: 0; background: #fff; }
.tabs.lined { border-bottom: 1px solid #b4b4b4; }
.tabs.lined .tab { padding: 0 11px; }
.tick { display: flex; align-items: center; gap: 5px; height: 14px; }
.tick.off, .off label { color: #858585; }
.strong { font-size: 12px; font-weight: 700; }
.field { height: 22px; padding: 0 4px; background: #fff; border: 1px solid #a8a8a8; border-radius: 3px; min-width: 0; }
.combo { position: relative; display: flex; align-items: center; gap: 2px; height: 22px; padding: 0 4px; border: 1px solid #a8a8a8; border-radius: 3px; background: linear-gradient(#fff, #f0f0f0); }
.combo::after { content: ""; position: absolute; right: 7px; border: 4px solid transparent; border-top: 5px solid #555; border-bottom: 0; pointer-events: none; }
.combo.tall { height: 24px; }
.combo select { appearance: none; flex: 1; min-width: 0; outline: 0; }
.combo.off { border-color: #c4c4c4; background: #f3f3f3; }
.combo.off::after { opacity: .45; }
.combo.split { padding: 0 3px; background: linear-gradient(90deg, #fff calc(100% - 21px), #b4b4b4 calc(100% - 21px) calc(100% - 20px), #f7f7f7 calc(100% - 20px)); }
.btn, .more, .minibar button, .ops button, .objrow button { border: 1px solid #a8a8a8; border-radius: 3px; background: linear-gradient(#fff, #f0f0f0); }
.btn { width: 80px; height: 21px; }
.btn:disabled { color: #858585; border-color: #c4c4c4; }
.btn.wide { width: 201px; }
.btn.primary { border-color: #308cc6; background: linear-gradient(#f8fbfe, #e1eaf2); }
.btn.faint { color: #777; flex: 1; }
.btnrow { display: flex; gap: 6px; }
.grow { flex: 1; }
.end { justify-content: flex-end; }

.clip-body { padding: 11px 11px 12px; }
.clip-cols { display: grid; grid-template-columns: 1fr 16px 257px; height: 428px; margin-bottom: 25px; }
.clip-body .btnrow + .btnrow { margin-top: 6px; }
.tabset { display: flex; flex-direction: column; }
.pane { flex: 1; display: flex; flex-direction: column; border: 1px solid #b4b4b4; padding: 5px 4px 0 5px; margin-top: -1px; box-shadow: inset 1px 1px #fafafa; line-height: 16px; }
.pane .tick { margin: 10px 0 8px; }
.pane .tick.last { margin-top: 8px; }
.pane .line { display: flex; align-items: flex-start; margin-top: 4px; }
.pane .combo { width: 281px; margin-right: 9px; }
.pane .field { flex: 1; margin-right: 6px; }
.flat { display: flex; justify-content: center; align-items: center; width: 24px; height: 24px; margin-right: 12px; }
.flat + .flat { margin-right: 7px; }
.more { position: relative; width: 24px; height: 21px; line-height: 14px; margin-left: auto; }
.more::after { content: ""; position: absolute; right: 1px; bottom: 3px; border: 3px solid transparent; border-top: 4px solid #555; border-bottom: 0; }
.gutter { display: flex; flex-direction: column; justify-content: space-between; align-items: center; padding-top: 2px; }
.gutter i { width: 6px; height: 18px; }
.gutter .left-arrow { width: 0; height: 0; border: 4px solid transparent; border-right: 5px solid #444; border-left: 0; }
.gutter .vdots { width: 0; border-left: 1px dotted #999; }
.helpbox { background: #fff; border: 1px solid #b4b4b4; padding: 7px 4px; color: #6e6e6e; white-space: nowrap; }
.helpbox h3 { color: #555; font: 700 17px/18px "Open Sans", sans-serif; margin-bottom: 13px; }
.helpbox p + p { margin-top: 12px; }
.progress { flex: 1; height: 21px; text-align: center; line-height: 19px; background: #fff; border: 1px solid #a8a8a8; border-radius: 3px; }

.calc-body { padding: 14px 11px 11px; }
.calc-top { display: grid; grid-template-columns: 389px 1fr; gap: 7px; margin: 9px 0 6px 1px; }
.groupbox { height: 107px; margin-top: 4px; border: 1px solid #d0d0d0; border-radius: 2px; background: #ebebeb; }
.newfield { display: grid; grid-template-columns: 131px 78px 1fr 78px; grid-template-rows: 25px 24px 25px 22px; align-items: center; padding: 7px 5px 0 4px; }
.newfield .full { grid-column: 1 / -1; }
.newfield .full2 { grid-column: 2 / -1; }
.newfield label[for=fprec] { padding-left: 5px; }
.spin { position: relative; display: flex; height: 20px; background: linear-gradient(90deg, #fff calc(100% - 15px), #b4b4b4 calc(100% - 15px) calc(100% - 14px), #f7f7f7 calc(100% - 14px)); border: 1px solid #a8a8a8; border-radius: 3px; padding-left: 5px; }
.spin input { flex: 1; min-width: 0; }
.spin i { width: 16px; display: flex; flex-direction: column; align-items: center; justify-content: center; gap: 3px; }
.spin i::before { content: ""; border: 4px solid transparent; border-bottom: 4px solid #666; border-top: 0; }
.spin i::after { content: ""; border: 4px solid transparent; border-top: 4px solid #666; border-bottom: 0; }
.spin.off { color: #999; background: linear-gradient(90deg, #efefef calc(100% - 15px), #c4c4c4 calc(100% - 15px) calc(100% - 14px), #f3f3f3 calc(100% - 14px)); border-color: #c4c4c4; }
.spin.off i { opacity: .6; }
.existing { padding: 44px 5px 0 4px; }
.expr { display: grid; grid-template-columns: 225px 22px 140px 13px 241px; padding: 10px 0 0 9px; }
.expr .gutter { height: 288px; }
.minibar { display: flex; gap: 2px; }
.minibar button, .objrow button { display: flex; align-items: center; justify-content: center; width: 24px; height: 23px; }
.minibar button:disabled svg { opacity: .35; filter: grayscale(.6); }
.minibar button:disabled, .objrow button:disabled { border-color: #ccc; }
.editor { display: block; width: 100%; height: 182px; margin-top: 6px; padding: 2px; resize: none; background: #fff; border: 1px solid #b4b4b4; color: #4271ae; font: 13px/16px "Liberation Mono", monospace; }
.ops { display: grid; grid-template-columns: repeat(10, 1fr); gap: 2px; margin-top: 5px; }
.ops button { height: 22px; min-width: 0; }
.objrow { display: flex; align-items: center; gap: 6px; margin-top: 8px; }
.objrow .combo { flex: 1; }
.preview { position: relative; display: flex; gap: 5px; margin-top: 6px; }
.scribble { position: absolute; left: -12px; top: -14px; overflow: visible; }
.scribble path { fill: none; stroke: #ed1c24; stroke-width: 8; stroke-linecap: round; stroke-linejoin: round; }
.findrow { display: flex; gap: 6px; }
.findrow .find { width: 54px; gap: 6px; padding-left: 7px; }
.findrow .find input { font-style: normal; }
.fnbox { display: grid; grid-template-columns: 1fr 14px; height: 260px; margin-top: 6px; background: #fff; border: 1px solid #b4b4b4; overflow: hidden; }
.fns { font: 11px/15px "Open Sans", sans-serif; min-width: 0; overflow: hidden; }
.fns li { display: flex; height: 15px; align-items: center; padding-left: 6px; white-space: nowrap; }
.fns li:first-child { margin-top: 1px; font-weight: 700; padding-left: 23px; }
.fns .arrow { width: 14px; }
.fns span { flex: 1; background: #c0c0c0; padding-left: 3px; }
.blank { height: 289px; background: #fff; border: 1px solid #b4b4b4; }
.notice { display: flex; gap: 37px; padding: 39px 0 0 9px; white-space: nowrap; height: 102px; }
.notice p { padding-top: 4px; }
```

FILE: app.js
```js
// Toolbar notation: "=" grip, "|" separator, "name" button,
// ":x" disabled, ":v" with drop-down arrow, ":on" pressed.
const BARS = [
  "= page open save layout layouts style = pan:on panto zin zout zfull zsel zlay z11:x zprev znext:x newmap new3d bookmark bookmarks clock refresh = identify table abacus gear sigma ruler:v tip action:x:v textann:v",
  "= source gpkg shp feather chip | virtual | = pencils:x pencil save:x addpoly:x vertex:x:v modify:x trash:x cut:x copy paste:x undo:x redo:x = abc chart | pin abcred | pin:x abeye:x abmove:x abrot:x abedit:x = globe = python = help = reload",
  "= select:v selval:v desel:v selloc",
];
const MENU = ["Pro<u>j</u>ekt", "<u>E</u>dycja", "<u>W</u>idok", "W<u>a</u>rstwa", "<u>U</u>stawienia", "<u>W</u>tyczki", "Wekt<u>o</u>r", "<u>R</u>aster", "<u>B</u>azy danych", "W <u>i</u>nternecie", "Siatka", "Pro<u>c</u>essing", "<u>P</u>omoc"];
const DIRS = ["gps", "grassdata", "projects", "raster", "shapefiles"];
const FILES = ["airports", "alaska", "builtups", "grassland", "lakes", "landice", "majrivers", "pipelines", "popp", "railroads", "regions", "rivers", "storagep", "swamp", "trails", "trees", "tundra"];
const TASKS = ["t-win", "t-find", "t-note", "t-files:run", "t-amp", "t-chrome:run", "t-spot:run", "t-net", "t-ij", "t-vs", "t-vs2", "t-and", "t-teams", "qgis:run", "t-pdf:run", "t-cmd:run", "t-git:run", "t-paint:run", "qgis:run"];

const child = (name, color, opt = {}) => ({ name, color, child: true, ...opt });
const LAYERS_MAIN = [
  child("Sitka", "#265ddb"), child("Skagway-Yakutat-Angoon", "#79d254"), child("Southeast Fairbanks", "#e9c53d"),
  child("Valdez-Cordova", "#895dd3"), child("Wade Hampton", "#c83a45"), child("Wrangell-Petersburg", "#cdea74"),
  child("Yukon-Koyukuk", "#da3267"), child("", "#1e2cd8"),
  { name: "railroads", icon: "line", tint: "railline", on: true },
  { name: "trees", icon: "blob", tint: "greyblob", open: true },
  child("Deciduous", "#e65c64", { roomy: true, on: true }), child("Evergreen", "#82ea13", { roomy: true }),
  child("Mixed Trees", "#84ebe6", { roomy: true }), child("", "#6a1bca", { roomy: true }),
  { name: "airports", icon: "dot" }, { name: "trees", color: "#987db7" }, { name: "alaska", color: "#91522d" },
  { name: "Matanuska-Susitna", color: "#a47158", on: true },
];
const LAYERS_CLIPPED = [
  { name: "Przycięte", icon: "line", tint: "ramline", on: true, selected: true },
  { name: "regions", icon: "blob", tint: "greyblob", open: true },
  ...[["Aleutians East", "#4c97e2"], ["Aleutians West", "#3c1ce4"], ["Anchorage", "#c6ca5e"], ["Bethel", "#42e6a6"], ["Bristol Bay", "#92cd54"], ["Denali", "#75dac8"], ["Dillingham", "#5bda88"], ["Fairbanks North Star", "#d98b5e"], ["Haines", "#d222c8"], ["Juneau", "#8eef89"], ["Ketchikan Gateway", "#3ce855"], ["Kenai Peninsula", "#50aed0"], ["Kodiak Island", "#b269e8"], ["Lake and Peninsula", "#d05344"]].map(([n, c]) => child(n, c, { roomy: true })),
  child("Matanuska-Susitna", "#e765c5", { roomy: true, on: true }),
];

const NORTH = "M1040 146L1030 133L1020 129L995 127L985 120L965 115L950 106L938 105V98L920 96L905 97L895 92L885 81L868 79L855 82L840 95L825 110L800 125L775 131L758 133L748 142L735 158L710 181L712 212L719 235L707 265L715 271L705 284L697 288L692 298L700 315L721 346L724 372L745 392L750 402L748 408L760 425L763 437L775 455L783 468L778 482L785 496L781 518L773 522V533L735 558M938 105V110L900 112M750 402L768 401";
const MIDDLE = "M735 558L718 586L700 600L688 612L672 634L662 651L655 679L671 688L663 702L656 722L655 733L632 748L612 765L592 795L594 816L588 830V850L594 878L602 908L604 940L613 958L611 1000L615 1022L625 1038L640 1055L662 1064L680 1072L715 1074L735 1073L768 1081L783 1077";
const SOUTH = "M768 1081L769 1096L765 1103L748 1108L725 1120L713 1134L705 1152L695 1159L683 1166L665 1180M652 1195L661 1201L663 1214L688 1240L718 1248L735 1247L763 1262L795 1255L815 1265L836 1283L850 1296L884 1300M836 1283V1300L825 1322L828 1330L826 1350L813 1366L780 1376L772 1390V1410L783 1440L779 1475L769 1497";
const REGION = "M82 757L275 753V732L677 562L926 547L922 502L1180 483L1201 632L1210 634L1245 839L1147 847L1150 872L1156 874L1167 972L1172 974L1185 1074L1139 1078V1091L783 1114L781 1106L772 1105L768 1097L755 1098L736 1102L728 1095L700 1101L680 1114L668 1128L655 1136L653 1168L643 1177L583 1173L551 1180L538 1162L528 1170L516 1162L512 1176L480 1190L462 1197L460 1180L396 1182L393 1131L89 1138V1112L92 1110L85 890ZM913 1108L915 1131";
const wrapMap = (inner) => `<svg><g transform="translate(168,39) scale(.33333,.43366)">${inner}</g></svg>`;
const rail = (d, cls = "") => `<path class="rail ${cls}" d="${d}"/>`;

const WINDOWS = {
  a: { layers: LAYERS_MAIN, thumb: [157, 145], map: `<path class="region" d="${REGION}"/>` + rail(NORTH + MIDDLE + SOUTH) },
  b: { layers: LAYERS_MAIN, thumb: [157, 145], map: rail(NORTH + MIDDLE + SOUTH), current: 13 },
  c: { layers: LAYERS_CLIPPED, thumb: [0, 132], map: rail(MIDDLE + "M768 1081V1096", "clipped") },
};

const icon = (id, cls = "i24") => `<svg class="${cls}"><use href="#${id}"/></svg>`;

function toolbar(spec, i) {
  const items = spec.split(" ").map((t) => {
    if (t === "=") return '<span class="handle"></span>';
    if (t === "|") return '<span class="sep"></span>';
    const [id, ...f] = t.split(":");
    return `<button class="tool${f.includes("v") ? " has-menu" : ""}${f.includes("on") ? " on" : ""}" aria-label="${id}"${f.includes("x") ? " disabled" : ""}>${icon(id)}</button>`;
  });
  return `<div class="toolbar${i === 2 ? " short" : ""}">${items.join("")}</div>`;
}

function dock(title, tools) {
  const buttons = tools.map((t) => `<button class="${t === "eps" ? "has-menu" : ""}" aria-label="${t}">${icon(t, "i16")}</button>`).join("");
  return `<div class="dock-title"><h2>${title}</h2><button aria-label="Odepnij">${icon("float", "i11")}</button><button aria-label="Zamknij">${icon("close", "i11")}</button></div><div class="dock-tools">${buttons}</div>`;
}

function layerRow(l) {
  const mark = l.icon ? icon(l.icon, "i16 " + (l.tint || "")) : `<i class="swatch${l.child ? "" : " small"}" style="background:${l.color}"></i>`;
  const cls = [l.child ? "child" : "top", l.roomy && "roomy", l.selected && "sel", !l.child && !l.on && "hiddenlayer"].filter(Boolean).join(" ");
  return `<li class="${cls}"><i class="arrow ${l.open ? "opened" : "leaf"}"></i><label><input type="checkbox"${l.on ? " checked" : ""}>${mark}<span>${l.name}</span></label>${l.selected ? icon("memory", "memo") : ""}</li>`;
}

function desk(key) {
  const w = WINDOWS[key];
  const dirs = DIRS.map((d) => `<li class="dir"><i class="arrow${d === "shapefiles" ? " opened" : ""}"></i>${icon(d === "shapefiles" ? "folderopen" : "folder", "i16")}<span>${d}</span></li>`).join("");
  const files = FILES.map((f) => `<li${f === "regions" ? ' class="sel"' : ""}>${icon("blob", "i16 vectorblob")}<span>${f}.shp</span></li>`).join("");
  const tasks = TASKS.map((t, i) => {
    const [id, run] = t.split(":");
    return `<button class="task${run ? " run" : ""}${w.current === i ? " current" : ""}" aria-label="${id}">${icon(id)}</button>`;
  }).join("");
  const id = (n) => `${n}-${key}`;
  return `<div class="desk">
    <header class="title">${icon("qgis", "i16")}<span>*Projekt bez nazwy — QGIS</span></header>
    <nav class="menu">${MENU.map((m) => `<button>${m}</button>`).join("")}</nav>
    ${BARS.map(toolbar).join("")}
    <div class="workspace">
      <aside class="docks">
        ${dock("Przeglądarka", ["addlayer", "refresh", "filter", "collapse", "info"])}
        <div class="listbox"><ul class="browser">${dirs}${files}</ul>
          <div class="vbar"><b class="up"></b><i style="margin-top:115px;height:54px"></i><b class="down"></b></div>
          <div class="hbar"><b class="lft"></b><i style="width:218px"></i><b class="rgt"></b></div><div class="corner"></div></div>
        <div class="hgrip"></div>
        ${dock("Warstwy", ["brush", "group", "eye", "filter", "eps", "expand", "collapse", "remove"])}
        <div class="listbox layerbox"><ul class="layers">${w.layers.map(layerRow).join("")}</ul>
          <div class="vbar"><b class="up"></b><i style="margin-top:${w.thumb[0]}px;height:${w.thumb[1]}px"></i><b class="down"></b></div></div>
      </aside>
      <div class="canvas">${wrapMap(w.map)}</div>
    </div>
    <footer class="status">
      <div class="find">${icon("lens", "i14")}<input type="text" placeholder="Szukana fraza (Ctrl+K)" aria-label="Szukaj"></div>
      <div class="readouts readouts-${key}">
        <label for="${id("xy")}">Współrzędne</label><input class="field coords" id="${id("xy")}" type="text" value="1037415,5710611">${icon("mouse", "i16 gapr")}
        <label for="${id("sc")}">Skala</label><div class="combo split scale"><select id="${id("sc")}"><option>1:3323327</option></select></div>${icon("lock", "i14 gaps")}
        <label for="${id("zm")}">Powiększenie</label><div class="spin zoom"><input id="${id("zm")}" type="text" value="100%"><i></i></div>
        <label for="${id("rt")}">Obrót</label><input class="field turn" id="${id("rt")}" type="text" value="0,0 °">
      </div>
    </footer>
    <nav class="taskbar">${tasks}</nav>
  </div>`;
}

document.querySelectorAll("[data-window]").forEach((el) => el.insertAdjacentHTML("afterbegin", desk(el.dataset.window)));

const FUNCTIONS = ["Data i czas", "Funkcje agreguj…", "General", "Geometria", "Kolor", "Konwersja", "Luźne dopasowy…", "Mapy wartości", "Matematyczne", "Operatory", "Pliki i ścieżki", "Pola i wartości", "Rastry", "Tablice", "Tekstowe", "Warstwy mapy"];
document.querySelector(".fns").innerHTML = "<li>row_number</li>" + FUNCTIONS.map((f) => `<li><i class="arrow"></i><span>${f}</span></li>`).join("");
```
